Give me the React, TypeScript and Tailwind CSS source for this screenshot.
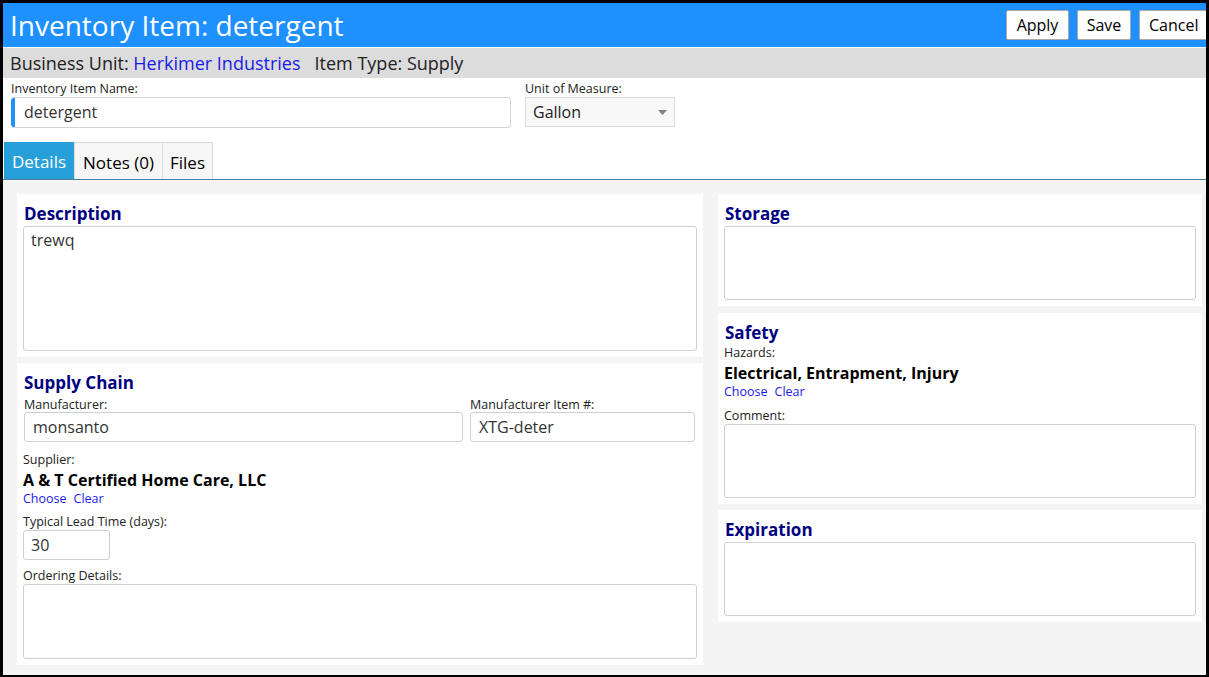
import React from 'react';

const font = { fontFamily: '"Open Sans", "Noto Sans", sans-serif' };

function Label({ children, className = '' }: { children: React.ReactNode; className?: string }) {
  return <div className={`text-[12.5px] leading-[14px] text-[#222] ${className}`}>{children}</div>;
}

function Box({ className = '', children }: { className?: string; children?: React.ReactNode }) {
  return (
    <div className={`border border-[#cfcfcf] rounded-[3px] bg-white text-[16px] text-[#333] ${className}`}>
      {children}
    </div>
  );
}

function Panel({ title, children, className = '' }: { title: string; children: React.ReactNode; className?: string }) {
  return (
    <div className={`bg-white px-[6px] pt-[8px] pb-[6px] ${className}`}>
      <div className="text-[17px] leading-[24px] font-bold text-[#000080] pl-[1px]">{title}</div>
      {children}
    </div>
  );
}

function Links() {
  return (
    <div className="text-[12.5px] leading-[14px] text-[#1a1ae6] flex gap-[7px] mt-[1px]">
      <span>Choose</span>
      <span>Clear</span>
    </div>
  );
}

export default function App() {
  return (
    <div
      style={font}
      className="w-[1209px] h-[677px] border-black border-t-[3px] border-l-[3px] border-r-[3px] border-b-[2px] flex flex-col bg-white overflow-hidden"
    >
      {/* header */}
      <div className="h-[44px] bg-[#1E90FF] flex items-center justify-between pl-[7px] shrink-0">
        <div className="text-[28px] text-white leading-none">Inventory Item: detergent</div>
        <div className="flex gap-[8px] items-center">
          <button className="w-[63px] h-[30px] bg-white border border-[#aaa] rounded-[2px] text-[16px] text-black">Apply</button>
          <button className="w-[54px] h-[30px] bg-white border border-[#aaa] rounded-[2px] text-[16px] text-black">Save</button>
          <button className="w-[67px] h-[30px] bg-white border border-r-0 border-[#aaa] rounded-l-[2px] text-[16px] text-black text-left pl-[9px]">Cancel</button>
        </div>
      </div>
      <div className="h-[1px] bg-white shrink-0" />
      <div className="h-[30px] bg-[#dcdcdc] flex items-center px-[7px] text-[18px] text-[#222] shrink-0">
        <span>Business Unit:&nbsp;</span>
        <span className="text-[#1a1ae6]">Herkimer Industries</span>
        <span className="ml-[14px]">Item Type: Supply</span>
      </div>

      {/* name + unit */}
      <div className="flex gap-[14px] pl-[8px] pt-[4px] shrink-0">
        <div className="w-[500px]">
          <Label className="mb-[1px]">Inventory Item Name:</Label>
          <div className="h-[31px] flex border border-[#d4d4d4] border-l-0 rounded-[3px]">
            <div className="w-[4px] bg-[#1E90FF] rounded-l-[3px]" />
            <div className="pl-[9px] text-[16px] leading-[29px] text-[#333]">detergent</div>
          </div>
        </div>
        <div className="w-[150px]">
          <Label className="mb-[1px]">Unit of Measure:</Label>
          <div className="h-[30px] flex items-center justify-between bg-[#f8f8f8] border border-[#dcdcdc] px-[7px] text-[16px] text-[#222]">
            <span>Gallon</span>
            <svg width="9" height="5" viewBox="0 0 9 5">
              <polygon points="0,0 9,0 4.5,5" fill="#808080" />
            </svg>
          </div>
        </div>
      </div>

      {/* tabs */}
      <div className="flex pl-[1px] mt-[14px] border-b border-[#4a7f9f] shrink-0">
        <div className="w-[70px] h-[37px] pt-[3px] bg-[#27a0da] text-white text-[17px] flex items-center justify-center">Details</div>
        <div className="w-[89px] h-[37px] pt-[3px] bg-[#f6f6f6] border border-b-0 border-[#dcdcdc] text-black text-[17px] flex items-center justify-center">Notes (0)</div>
        <div className="w-[50px] h-[37px] pt-[3px] bg-[#f6f6f6] border border-b-0 border-l-0 border-[#dcdcdc] text-black text-[17px] flex items-center justify-center">Files</div>
      </div>

      {/* content */}
      <div className="flex-1 bg-[#f4f4f4] flex gap-[15px] pl-[14px] pt-[14px]">
        <div className="w-[686px] flex flex-col gap-[6px]">
          <Panel title="Description">
            <Box className="h-[125px] px-[7px] leading-[26px]">trewq</Box>
          </Panel>
          <Panel title="Supply Chain">
            <div className="flex gap-[7px] mt-[3px] pl-[1px]">
              <div className="w-[439px]">
                <Label>Manufacturer:</Label>
                <Box className="h-[30px] px-[8px] leading-[28px]">monsanto</Box>
              </div>
              <div className="w-[225px]">
                <Label>Manufacturer Item #:</Label>
                <Box className="h-[30px] px-[8px] leading-[28px]">XTG-deter</Box>
              </div>
            </div>
            <Label className="mt-[11px]">Supplier:</Label>
            <div className="text-[16px] leading-[22px] font-bold text-black mt-[2px]">A &amp; T Certified Home Care, LLC</div>
            <Links />
            <Label className="mt-[9px]">Typical Lead Time (days):</Label>
            <Box className="w-[87px] h-[30px] px-[7px] leading-[28px] mt-[1px]">30</Box>
            <Label className="mt-[9px]">Ordering Details:</Label>
            <Box className="h-[75px] mt-[1px]" />
          </Panel>
        </div>
        <div className="w-[484px] flex flex-col">
          <Panel title="Storage">
            <Box className="h-[74px]" />
          </Panel>
          <Panel title="Safety" className="mt-[7px]">
            <Label className="mt-[1px]">Hazards:</Label>
            <div className="text-[16px] leading-[22px] font-bold text-black mt-[2px]">Electrical, Entrapment, Injury</div>
            <Links />
            <Label className="mt-[10px]">Comment:</Label>
            <Box className="h-[74px] mt-[1px]" />
          </Panel>
          <Panel title="Expiration" className="mt-[6px]">
            <Box className="h-[74px]" />
          </Panel>
        </div>
      </div>
    </div>
  );
}
